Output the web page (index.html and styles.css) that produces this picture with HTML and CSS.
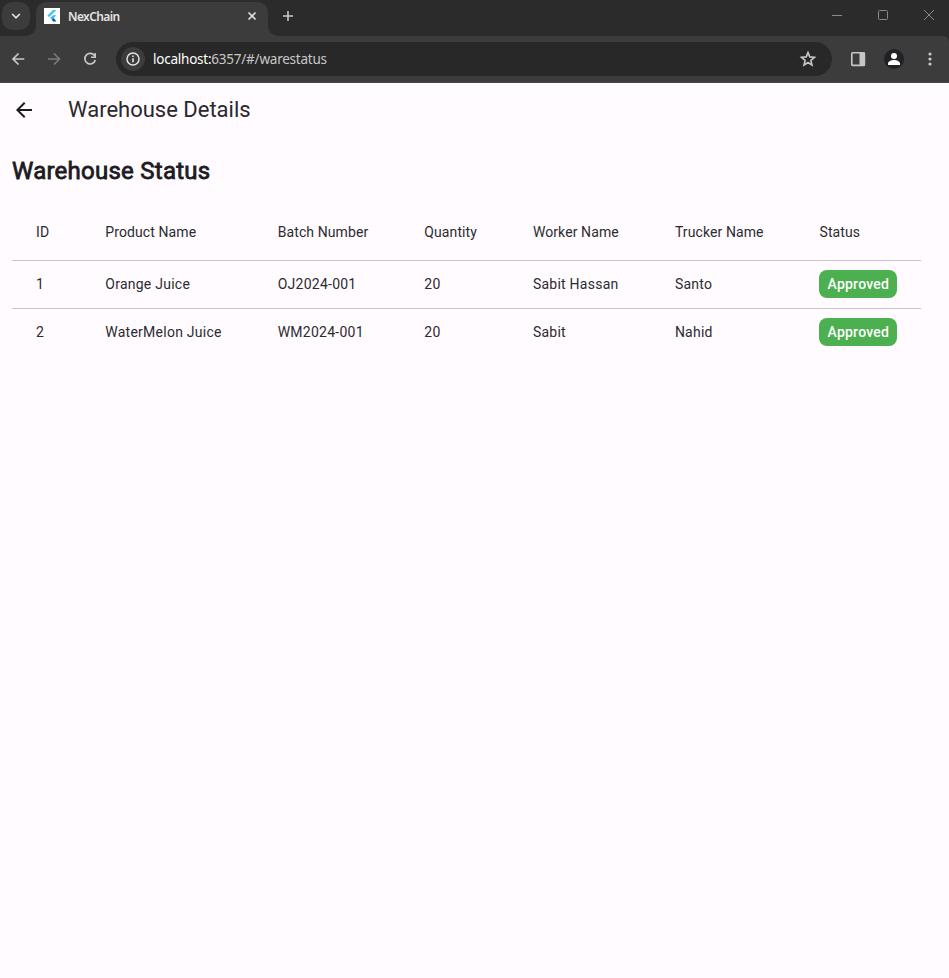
FILE: index.html
```html
<!DOCTYPE html>
<html lang="en">
<head>
<meta charset="utf-8">
<title>NexChain</title>
<link rel="stylesheet" href="styles.css">
</head>
<body>
<div class="browser">
  <header class="tabstrip">
    <div class="tab-search">
      <svg width="28" height="28" viewBox="0 0 28 28"><path d="M10.2 12l3.8 3.8 3.8-3.8" fill="none" stroke="#e3e3e3" stroke-width="1.7"/></svg>
    </div>
    <div class="tab">
      <svg class="favicon" width="16" height="16" viewBox="0 0 16 16"><rect width="16" height="16" fill="#fff"/><path d="M9 2h3.500L5.200 9.300 3.400 7.600z" fill="#47c5fb"/><path d="M9 7.200h3.500L9.600 10.100l-1.700 1.700-1.800-1.800z" fill="#47b5f5"/><path d="M7.900 11.800l1.700-1.700 2.900 3.400H9.200z" fill="#00569e"/></svg>
      <span class="tab-title">NexChain</span>
      <svg class="tab-close" width="16" height="16" viewBox="0 0 16 16"><path d="M4.500 4.500l7 7M11.500 4.500l-7 7" stroke="#e3e3e3" stroke-width="1.600"/></svg>
    </div>
    <svg class="new-tab" width="16" height="16" viewBox="0 0 16 16"><path d="M8 3v10M3 8h10" stroke="#c7c7c7" stroke-width="1.600"/></svg>
    <div class="window-controls">
      <svg width="46" height="30" viewBox="0 0 46 30"><path d="M18 15.500h10" stroke="#898989"/></svg>
      <svg width="46" height="30" viewBox="0 0 46 30"><rect x="18.500" y="10.500" width="9" height="9" rx="1" fill="none" stroke="#898989"/></svg>
      <svg width="43" height="30" viewBox="0 0 43 30"><path d="M18 10l10 10M28 10L18 20" stroke="#898989"/></svg>
    </div>
  </header>
  <nav class="toolbar">
    <svg class="nav-icon" width="36" height="36" viewBox="0 0 36 36"><path d="M24.300 18H13.200M18.500 12.500L13 18l5.500 5.500" fill="none" stroke="#c7c7c7" stroke-width="1.700"/></svg>
    <svg class="nav-icon" width="36" height="36" viewBox="0 0 36 36"><path d="M12 18h11.200M18 12.500l5.500 5.500-5.500 5.500" fill="none" stroke="#7b7b7b" stroke-width="1.700"/></svg>
    <svg class="nav-icon" width="36" height="36" viewBox="0 0 36 36"><path d="M22.800 15.100a5.300 5.300 0 1 0 .5 3.900" fill="none" stroke="#c7c7c7" stroke-width="1.700"/><path d="M24 12v5h-5v-1.600h3.400V12z" fill="#c7c7c7"/></svg>
    <div class="omnibox">
      <svg class="site-info" width="24" height="24" viewBox="0 0 24 24"><circle cx="12" cy="12" r="12" fill="#3c3c3c"/><circle cx="12" cy="12" r="6" fill="none" stroke="#e3e3e3" stroke-width="1.500"/><path d="M12 11.200v4.100M12 8.500v1.600" stroke="#e3e3e3" stroke-width="1.600"/></svg>
      <span class="url"><b>localhost:</b>6357/#/warestatus</span>
      <svg class="star" width="20" height="20" viewBox="0 0 20 20"><path d="M10 3.600l1.800 4.300 4.700.4-3.600 3.100 1.100 4.600-4-2.500L6 16l1.100-4.600-3.600-3.100 4.700-.4z" fill="none" stroke="#c7c7c7" stroke-width="1.600"/></svg>
    </div>
    <svg class="nav-icon side-panel" width="36" height="36" viewBox="0 0 36 36"><rect x="11.800" y="11.800" width="12.600" height="12.600" rx=".8" fill="none" stroke="#c7c7c7" stroke-width="1.600"/><path d="M19.500 11.500H25v13.500h-5.500z" fill="#c7c7c7"/></svg>
    <svg class="nav-icon" width="36" height="36" viewBox="0 0 36 36"><circle cx="18" cy="18" r="10" fill="#202124"/><circle cx="18" cy="15" r="3" fill="#fff"/><path d="M12 24v-1.500c0-2.200 3.500-3.500 6-3.500s6 1.300 6 3.500V24z" fill="#fff"/></svg>
    <svg class="nav-icon" width="36" height="36" viewBox="0 0 36 36"><g fill="#c7c7c7"><circle cx="18" cy="13" r="1.600"/><circle cx="18" cy="18" r="1.600"/><circle cx="18" cy="23" r="1.600"/></g></svg>
  </nav>
</div>
<main>
  <div class="appbar">
    <svg class="back" width="24" height="24" viewBox="0 0 24 24"><path d="M20 11H7.830l5.590-5.590L12 4l-8 8 8 8 1.410-1.410L7.830 13H20z" fill="#1c1b1f"/></svg>
    <h1>Warehouse Details</h1>
  </div>
  <h2>Warehouse Status</h2>
  <div class="table">
    <div class="row head"><span>ID</span><span>Product Name</span><span>Batch Number</span><span>Quantity</span><span>Worker Name</span><span>Trucker Name</span><span>Status</span></div>
    <div class="row"><span>1</span><span>Orange Juice</span><span>OJ2024-001</span><span>20</span><span>Sabit Hassan</span><span>Santo</span><span class="badge">Approved</span></div>
    <div class="row"><span>2</span><span>WaterMelon Juice</span><span>WM2024-001</span><span>20</span><span>Sabit</span><span>Nahid</span><span class="badge">Approved</span></div>
  </div>
</main>
</body>
</html>
```
FILE: styles.css
```css
* { box-sizing: border-box; }
body {
  margin: 0;
  min-height: 978px;
  background: #fffbff;
  color: #1c1b1f;
  font-family: Roboto, sans-serif;
}
svg { display: block; flex: none; }
.browser {
  background: #2b2b2b;
  font-family: "Noto Sans", "Open Sans", sans-serif;
}
.tabstrip {
  display: flex;
  height: 36px;
  background: linear-gradient(#3c3c3c, #3c3c3c) 26px 100% / 252px 10px no-repeat;
}
.tab-search {
  width: 36px;
  height: 36px;
  padding: 2px;
  background: #2b2b2b;
  border-bottom-right-radius: 10px;
}
.tab-search svg { background: #3c3c3c; border-radius: 10px; }
.tab {
  display: flex;
  align-items: center;
  width: 232px;
  height: 34px;
  margin-top: 2px;
  padding: 0 8px 6px;
  background: #3c3c3c;
  border-radius: 10px 10px 0 0;
}
.tab-title {
  flex: 1;
  margin-left: 8px;
  padding-top: 1px;
  color: #e3e3e3;
  font-size: 12px;
  font-weight: 600;
  letter-spacing: -0.6px;
}
.new-tab { box-sizing: content-box; padding: 8px 10px 12px 12px; background: #2b2b2b; border-bottom-left-radius: 10px; }
.window-controls { display: flex; margin-left: auto; }
.toolbar {
  display: flex;
  align-items: center;
  height: 47px;
  padding-bottom: 1px;
  background: #3c3c3c;
  border-bottom: 1px solid #474747;
  border-top-right-radius: 6px;
}
.omnibox {
  display: flex;
  align-items: center;
  width: 716px;
  height: 34px;
  margin-left: 8px;
  padding: 0 14px 0 5px;
  background: #282828;
  border-radius: 17px;
}
.url { flex: 1; margin-left: 8px; padding-top: 1px; color: #c7c7c7; font-size: 13.5px; letter-spacing: -0.23px; }
.url b { color: #fff; font-weight: 400; }
.side-panel { margin-left: 8px; }
.appbar {
  display: flex;
  align-items: center;
  height: 54px;
  padding-left: 12px;
}
h1 { margin: 0 0 0 32px; color: #29282c; font-size: 22px; font-weight: 400; line-height: 28px; }
h2 {
  margin: 18px 0 0 12px;
  font-size: 24px;
  font-weight: 400;
  line-height: 32px;
  letter-spacing: 0.25px;
  -webkit-text-stroke: 0.8px #1c1b1f;
}
.table {
  width: 909px;
  margin: 17px 0 0 12px;
  color: #2c2b2f;
  font-size: 14px;
  line-height: 20px;
  letter-spacing: 0.25px;
}
.row {
  display: grid;
  grid-template-columns: 69.3px 172.4px 146.6px 108.6px 142px 144.6px auto;
  align-items: center;
  justify-content: start;
  height: 48px;
  padding: 0 0 1px 24px;
  border-top: 1px solid #cac4d0;
}
.head { height: 56px; padding-bottom: 0; border-top: 0; letter-spacing: 0.1px; }
.badge {
  padding: 4px 8px;
  background: #4caf50;
  border-radius: 8px;
  color: #fff;
  font-weight: 500;
}
```
